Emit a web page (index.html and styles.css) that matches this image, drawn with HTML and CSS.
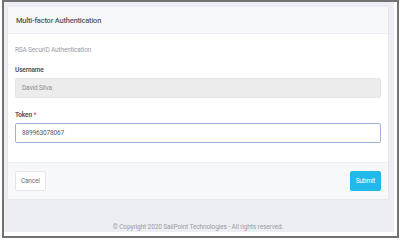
FILE: index.html
```html
<!DOCTYPE html>
<html lang="en">
<head>
  <meta charset="UTF-8">
  <meta name="viewport" content="width=device-width, initial-scale=1.0">
  <title>Multi-factor Authentication</title>
  <link rel="stylesheet" href="styles.css">
</head>
<body>

<div class="frame">
  <div class="page">
    <!-- MFA card -->
    <div class="card">
      <div class="card-header">
        <h4 class="card-title">Multi-factor Authentication</h4>
      </div>
      <div class="card-body">
        <p class="card-subtitle">RSA SecurID Authentication</p>
        <div class="form-group">
          <label for="username">Username</label>
          <input type="text" class="form-control" id="username" value="David Silva" disabled>
        </div>
        <div class="form-group">
          <label for="token">Token <span class="required">*</span></label>
          <input type="text" class="form-control focused" id="token" value="889963078067">
        </div>
      </div>
      <div class="card-footer">
        <button type="button" class="btn btn-default">Cancel</button>
        <button type="submit" class="btn btn-primary">Submit</button>
      </div>
    </div>
    <div class="copyright">&copy; Copyright 2020 SailPoint Technologies - All rights reserved.</div>
  </div>
</div>

</body>
</html>
```

FILE: styles.css
```css
body {
  margin: 0;
  background-color: #fff;
  font-family: Roboto, "Liberation Sans", sans-serif;
}

/* Screenshot frame */
.frame {
  box-sizing: border-box;
  width: 397px;
  height: 238px;
  margin-left: 2px;
  border: 2px solid #727272;
  background-color: #fff;
}

.page {
  box-sizing: border-box;
  height: 230px;
  margin-right: 3px;
  padding: 4px 5px 0 3px;
  background-color: #eceef3;
}

/* Card */
.card {
  background-color: #fff;
  border: 1px solid #e6e8ee;
  border-radius: 2px;
}

.card-header {
  height: 26px;
  display: flex;
  align-items: center;
  padding: 0 8px;
  background-color: #f7f8fa;
  border-bottom: 1px solid #ebedf2;
}

.card-title {
  margin: 0;
  font-size: 7.5px;
  font-weight: 500;
  letter-spacing: -0.2px;
  color: #575962;
}

.card-body {
  padding: 11px 7px 19px 7px;
}

.card-subtitle {
  margin: 0 0 10px 0;
  font-size: 6.5px;
  line-height: 10px;
  letter-spacing: -0.15px;
  color: #9a9ca5;
}

.form-group {
  display: flex;
  flex-direction: column;
}

.form-group + .form-group {
  margin-top: 12px;
}

.form-group label {
  font-size: 6.5px;
  line-height: 10px;
  font-weight: 700;
  letter-spacing: -0.15px;
  color: #575962;
  margin-bottom: 3px;
}

.required {
  color: #f4516c;
}

.form-control {
  box-sizing: border-box;
  height: 20px;
  padding: 0 6px;
  border: 1px solid #e4e4e4;
  border-radius: 2px;
  background-color: #ececec;
  font-family: inherit;
  font-size: 6.5px;
  letter-spacing: -0.15px;
  color: #8a8c93;
  outline: none;
}

.form-control.focused {
  background-color: #fff;
  border-color: #9fb2dc;
  color: #575962;
}

/* Footer */
.card-footer {
  display: flex;
  justify-content: space-between;
  padding: 8px 7px;
  background-color: #f7f8fa;
  border-top: 1px solid #ebedf2;
}

.btn {
  height: 20px;
  padding: 0 5px;
  border-radius: 2px;
  font-family: inherit;
  font-size: 6.5px;
  letter-spacing: -0.2px;
  cursor: pointer;
}

.btn-default {
  background-color: #fff;
  border: 1px solid #e4e6ec;
  color: #6f727d;
}

.btn-primary {
  background-color: #20b9ea;
  border: 1px solid #20b9ea;
  color: #fff;
}

.copyright {
  margin-top: 23px;
  text-align: center;
  font-size: 6.5px;
  letter-spacing: -0.1px;
  color: #9a9ca5;
}
```
